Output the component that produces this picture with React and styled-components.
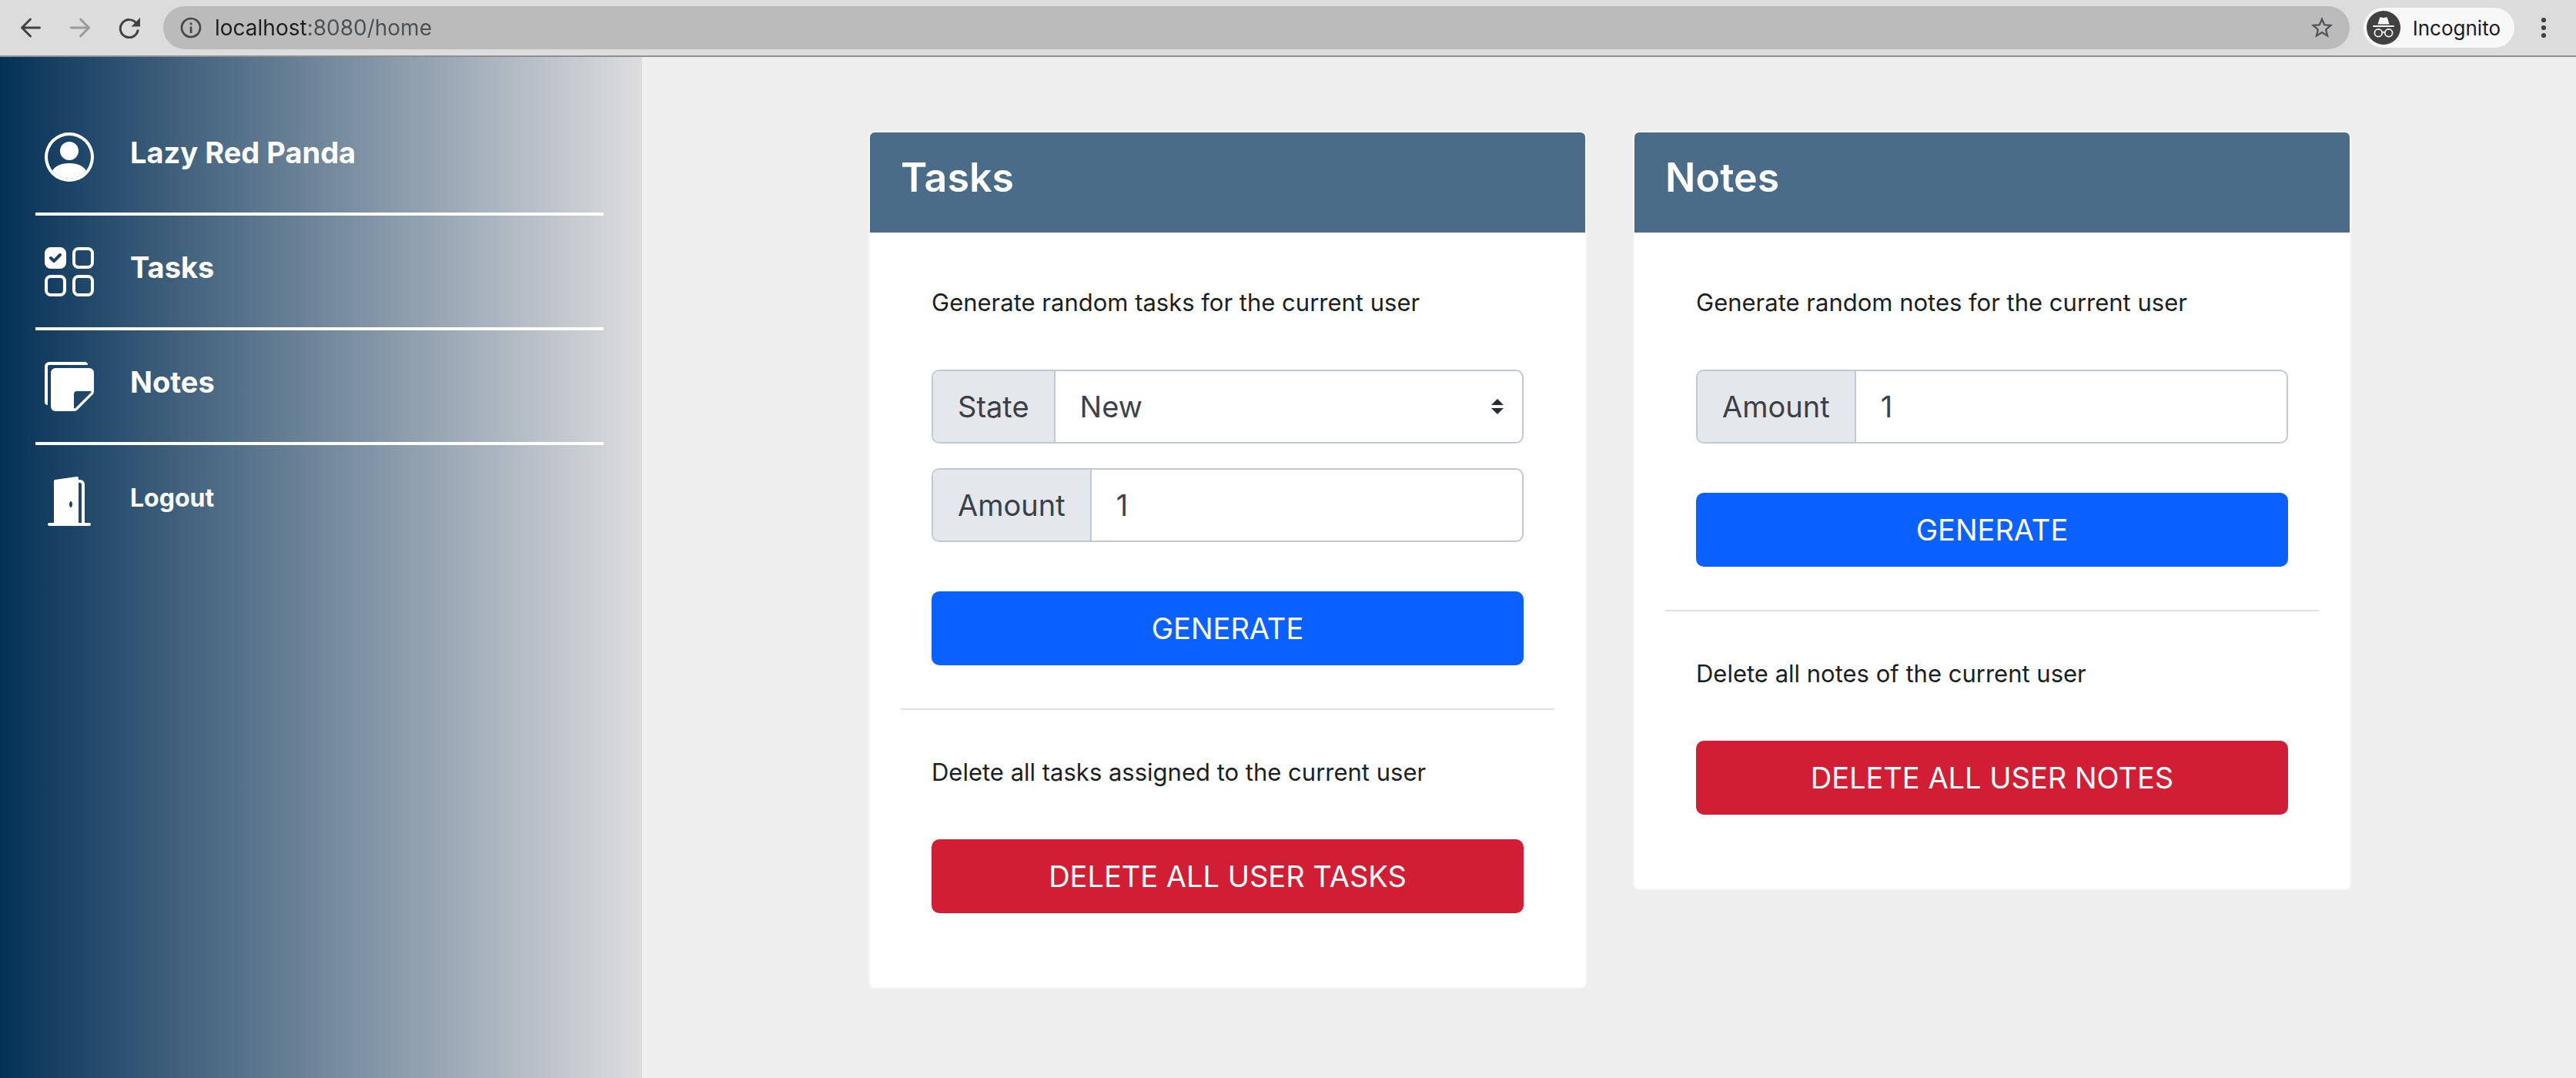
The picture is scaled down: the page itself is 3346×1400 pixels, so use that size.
import React from "react";
import styled, { createGlobalStyle } from "styled-components";
import { BsUiChecksGrid, BsStickiesFill, BsDoorOpenFill } from "react-icons/bs";
import { MdStarBorder } from "react-icons/md";

const GlobalStyle = createGlobalStyle`
  *, *::before, *::after { box-sizing: border-box; }
  body {
    margin: 0;
    background: #eeeeee;
    color: #1b1f23;
    font-family: Inter, "Liberation Sans", sans-serif;
    font-size: 31px;
  }
  button, input, select { font: inherit; margin: 0; }
`;

const Page = styled.div`
  display: flex;
  flex-direction: column;
  min-height: 100vh;
`;

/* Browser toolbar */

const Toolbar = styled.header`
  display: flex;
  align-items: center;
  padding: 8px 10px 8px 8px;
  background: #dcdcdc;
  border-bottom: 2px solid #8e8e8e;
`;

const ToolButton = styled.button`
  display: flex;
  align-items: center;
  justify-content: center;
  flex: none;
  width: 64px;
  height: 56px;
  padding: 0;
  border: 0;
  background: none;
  color: ${(p) => (p.$dim ? "#9a9a9a" : "#414141")};
`;

const AddressBar = styled.div`
  display: flex;
  align-items: center;
  flex: 1;
  gap: 17px;
  height: 56px;
  margin: 0 18px 0 12px;
  padding: 0 19px 0 22px;
  border-radius: 28px;
  background: #bbbbbb;
  color: #45474b;
`;

const AddressInput = styled.input`
  flex: 1;
  min-width: 0;
  height: 40px;
  padding: 0;
  border: 0;
  outline: 0;
  font-size: 28px;
  color: transparent;
  background: linear-gradient(to right, #1d1e20 119px, #4c4f53 119px);
  background-clip: text;
  -webkit-background-clip: text;
`;

const StarButton = styled.button`
  display: flex;
  padding: 0;
  border: 0;
  background: none;
  color: #505256;
`;

const IncognitoChip = styled.button`
  display: flex;
  align-items: center;
  gap: 16px;
  height: 52px;
  margin-right: 6px;
  padding: 0 18px 0 4px;
  border: 0;
  border-radius: 26px;
  background: #f8f8f8;
  color: #1b1b1d;
  font-size: 26px;
`;

/* Application shell */

const Shell = styled.div`
  display: flex;
  flex: 1;
`;

const Sidebar = styled.nav`
  flex: none;
  width: 834px;
  max-width: 25%;
  padding: 57px 50px 0 46px;
  background: linear-gradient(to right, #043157, #dddddf);
`;

const NavList = styled.ul`
  margin: 0;
  padding: 0;
  list-style: none;
`;

const NavItem = styled.li`
  padding: 41px 12px 40px;

  & + & { border-top: 4px solid #ffffff; }
`;

const NavLink = styled.a`
  display: flex;
  align-items: flex-start;
  gap: 47px;
  color: #ffffff;
  font-size: ${(p) => (p.$small ? "32px" : "38px")};
  font-weight: 700;
  line-height: ${(p) => (p.$small ? "56px" : "52px")};
  text-decoration: none;

  svg {
    flex: none;
    width: 64px;
    height: 64px;
  }
`;

const Main = styled.main`
  flex: 1;
  padding: 96px 40px 96px 42px;
`;

const CardGrid = styled.div`
  display: grid;
  grid-template-columns: 1fr 1fr;
  align-items: start;
  gap: 60px;
  max-width: 1926px;
  margin: 0 auto;
`;

/* Card */

const CardBox = styled.section`
  border: 2px solid #f7f7f7;
  border-radius: 8px;
  background: #ffffff;
  overflow: hidden;
`;

const CardTitle = styled.h2`
  margin: 0;
  padding: 24px 40px 36px;
  background: #4b6c88;
  color: #ffffff;
  font-size: 52px;
  font-weight: 600;
  line-height: 70px;
`;

const CardBody = styled.div`
  padding: 67px 40px 96px;
`;

const Form = styled.form`
  display: flex;
  flex-direction: column;
  padding: 0 40px;
`;

const Description = styled.p`
  margin: 0 0 63px;
  line-height: 48px;
`;

const Fields = styled.div`
  display: flex;
  flex-direction: column;
  gap: 32px;
  margin-bottom: 64px;
`;

const InputGroup = styled.div`
  display: flex;
  position: relative;
  height: 96px;
  border: 2px solid #c1c8d1;
  border-radius: 10px;
  background: #ffffff;
  overflow: hidden;
  font-size: 38px;
`;

const Addon = styled.label`
  display: flex;
  align-items: center;
  padding: 0 32px;
  border-right: 2px solid #c1c8d1;
  background: #e4e7ec;
  color: #3c4045;
`;

const NumberInput = styled.input`
  flex: 1;
  min-width: 0;
  padding: 0 32px;
  border: 0;
  outline: 0;
  background: none;
  color: #3b4249;
  appearance: textfield;

  &::-webkit-inner-spin-button { appearance: none; }
`;

const Select = styled.select`
  flex: 1;
  min-width: 0;
  padding: 0 72px 0 32px;
  border: 0;
  outline: 0;
  background: none;
  color: #3b4249;
  appearance: none;
`;

const Caret = styled.svg`
  position: absolute;
  top: 36px;
  right: 24px;
  width: 16px;
  height: 20px;
  fill: #272c30;
  pointer-events: none;
`;

const ActionButton = styled.button`
  height: 96px;
  padding: 0 32px;
  border: 0;
  border-radius: 10px;
  background: ${(p) => (p.$danger ? "#d11e35" : "#0a61ff")};
  color: #ffffff;
  font-size: 38px;
  text-transform: uppercase;
`;

const Divider = styled.hr`
  height: 2px;
  margin: 56px 0 57px;
  border: 0;
  background: #dfdfdf;
`;

/* Icons */

const BackIcon = () => (
  <svg width="28" height="28" viewBox="0 0 28 28" fill="none" stroke="currentColor" strokeWidth="3" strokeLinecap="round" strokeLinejoin="round">
    <path d="M25.500 14H3M13.500 3L2.500 14l11 11" />
  </svg>
);

const ForwardIcon = () => (
  <svg width="28" height="28" viewBox="0 0 28 28" fill="none" stroke="currentColor" strokeWidth="3" strokeLinecap="round" strokeLinejoin="round">
    <path d="M2.500 14H25M14.500 3l11 11-11 11" />
  </svg>
);

const ReloadIcon = () => (
  <svg width="28" height="28" viewBox="0 0 28 28">
    <path d="M23 8.200A11.500 11.500 0 1 0 25 17.800" fill="none" stroke="currentColor" strokeWidth="3" strokeLinecap="round" />
    <path d="M28 1v11.500H16.500z" fill="currentColor" />
  </svg>
);

const InfoIcon = () => (
  <svg width="28" height="28" viewBox="0 0 28 28" aria-hidden="true">
    <circle cx="14" cy="14" r="12" fill="none" stroke="currentColor" strokeWidth="2.700" />
    <path d="M12.700 12.500h2.700V21h-2.700zM12.700 7.500h2.700v2.700h-2.700z" fill="currentColor" />
  </svg>
);

const IncognitoIcon = () => (
  <svg width="44" height="44" viewBox="0 0 44 44" aria-hidden="true">
    <circle cx="22" cy="22" r="22" fill="#414141" />
    <path d="M17 9.500c.4-1.100 1-1.400 2-1.100 2 .7 4 .7 6 0 1-.3 1.600 0 2 1.100l2.500 8h-15z" fill="#f8f8f8" />
    <path d="M8.300 19h27.400v2H8.300z" fill="#f8f8f8" />
    <g fill="none" stroke="#f8f8f8" strokeWidth="1.700">
      <circle cx="15.300" cy="28.700" r="4.900" />
      <circle cx="28.700" cy="28.700" r="4.900" />
      <path d="M20.200 28.400c1.100-.9 2.500-.9 3.600 0" />
    </g>
  </svg>
);

const MenuIcon = () => (
  <svg width="28" height="28" viewBox="0 0 28 28" fill="currentColor">
    <circle cx="14" cy="4" r="3.100" />
    <circle cx="14" cy="14" r="3.100" />
    <circle cx="14" cy="24" r="3.100" />
  </svg>
);

const PersonIcon = () => (
  <svg viewBox="0 0 16 16" fill="currentColor" aria-hidden="true">
    <path d="M13.468 12.370C12.758 11.226 11.195 10 8 10s-4.757 1.225-5.468 2.370A6.987 6.987 0 0 0 8 15a6.987 6.987 0 0 0 5.468-2.630z" />
    <path fillRule="evenodd" d="M8 9a3 3 0 1 0 0-6 3 3 0 0 0 0 6z" />
    <path fillRule="evenodd" d="M8 1a7 7 0 1 0 0 14A7 7 0 0 0 8 1zM0 8a8 8 0 1 1 16 0A8 8 0 0 1 0 8z" />
  </svg>
);

const NAV = [
  { label: "Lazy Red Panda", href: "#profile", Icon: PersonIcon },
  { label: "Tasks", href: "#tasks", Icon: BsUiChecksGrid },
  { label: "Notes", href: "#notes", Icon: BsStickiesFill },
  { label: "Logout", href: "#logout", Icon: BsDoorOpenFill, small: true },
];

function AmountField({ id }) {
  return (
    <InputGroup>
      <Addon htmlFor={id}>Amount</Addon>
      <NumberInput id={id} type="number" min="1" defaultValue="1" />
    </InputGroup>
  );
}

function StateField({ id }) {
  return (
    <InputGroup>
      <Addon htmlFor={id}>State</Addon>
      <Select id={id} defaultValue="New">
        <option>New</option>
      </Select>
      <Caret viewBox="0 0 16 20" aria-hidden="true">
        <path d="M0 8L8 0l8 8zM0 12l8 8 8-8z" />
      </Caret>
    </InputGroup>
  );
}

function Card({ title, generateText, deleteText, deleteLabel, children }) {
  return (
    <CardBox>
      <CardTitle>{title}</CardTitle>
      <CardBody>
        <Form>
          <Description>{generateText}</Description>
          <Fields>{children}</Fields>
          <ActionButton type="button">Generate</ActionButton>
        </Form>
        <Divider />
        <Form>
          <Description>{deleteText}</Description>
          <ActionButton type="button" $danger>{deleteLabel}</ActionButton>
        </Form>
      </CardBody>
    </CardBox>
  );
}

export default function App() {
  return (
    <Page>
      <GlobalStyle />
      <Toolbar>
        <ToolButton aria-label="Back"><BackIcon /></ToolButton>
        <ToolButton aria-label="Forward" $dim><ForwardIcon /></ToolButton>
        <ToolButton aria-label="Reload"><ReloadIcon /></ToolButton>
        <AddressBar>
          <InfoIcon />
          <AddressInput type="text" aria-label="Address" defaultValue="localhost:8080/home" />
          <StarButton aria-label="Bookmark"><MdStarBorder size={34} /></StarButton>
        </AddressBar>
        <IncognitoChip>
          <IncognitoIcon />
          Incognito
        </IncognitoChip>
        <ToolButton aria-label="Menu"><MenuIcon /></ToolButton>
      </Toolbar>
      <Shell>
        <Sidebar>
          <NavList>
            {NAV.map(({ label, href, Icon, small }) => (
              <NavItem key={label}>
                <NavLink href={href} $small={small}>
                  <Icon />
                  {label}
                </NavLink>
              </NavItem>
            ))}
          </NavList>
        </Sidebar>
        <Main>
          <CardGrid>
            <Card
              title="Tasks"
              generateText="Generate random tasks for the current user"
              deleteText="Delete all tasks assigned to the current user"
              deleteLabel="Delete all user tasks"
            >
              <StateField id="task-state" />
              <AmountField id="task-amount" />
            </Card>
            <Card
              title="Notes"
              generateText="Generate random notes for the current user"
              deleteText="Delete all notes of the current user"
              deleteLabel="Delete all user notes"
            >
              <AmountField id="note-amount" />
            </Card>
          </CardGrid>
        </Main>
      </Shell>
    </Page>
  );
}
